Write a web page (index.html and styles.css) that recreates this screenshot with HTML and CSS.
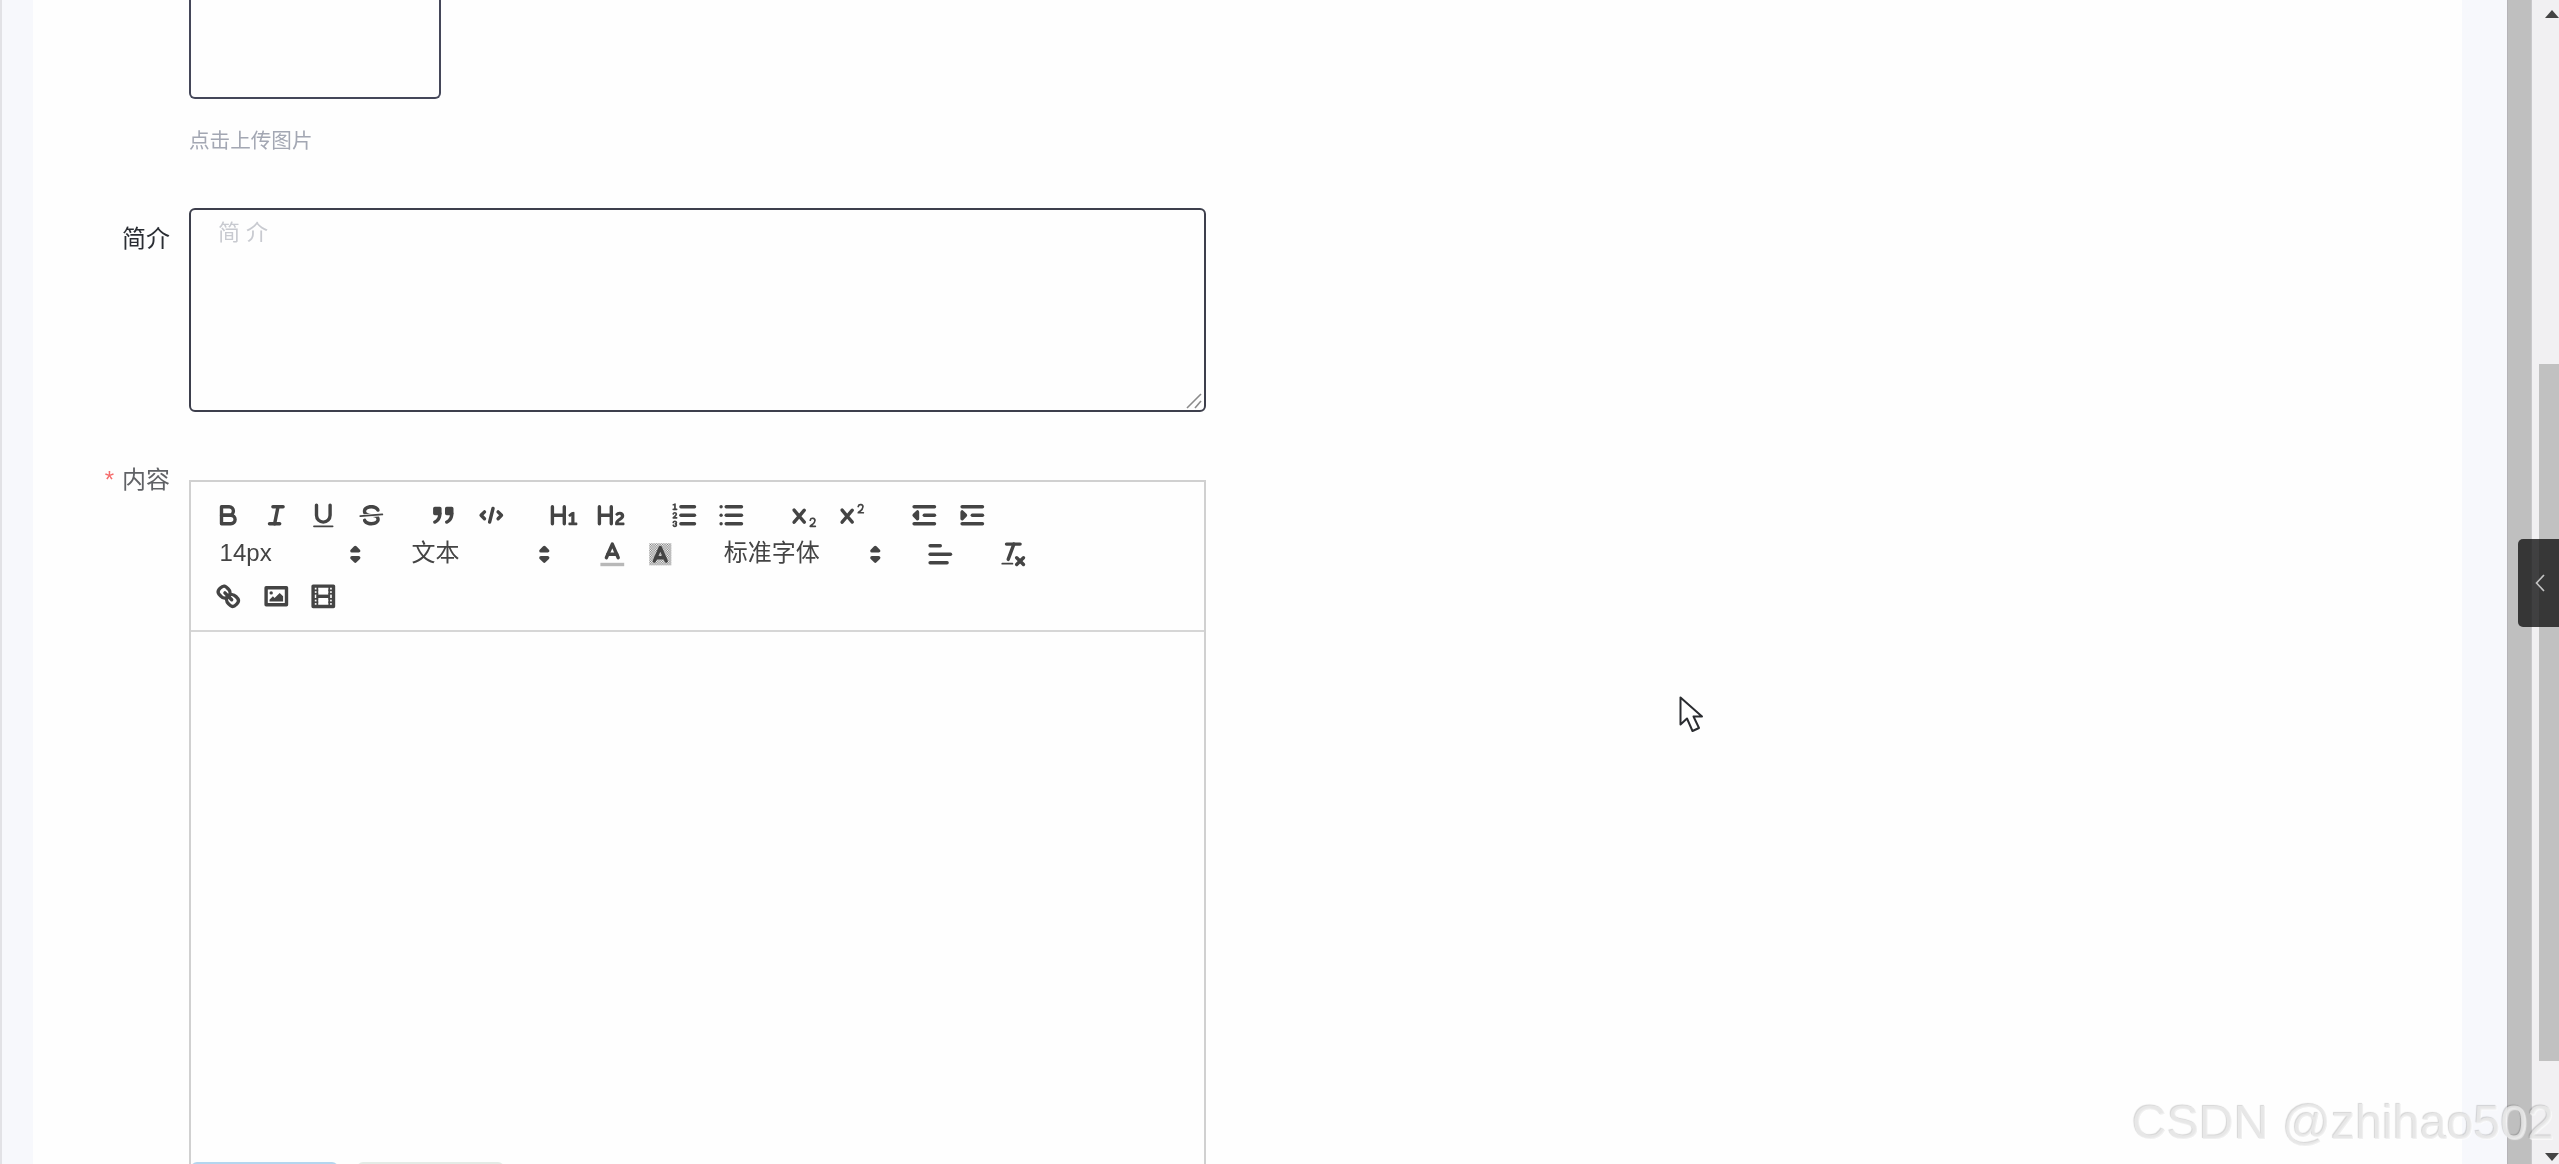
FILE: index.html
```html
<!DOCTYPE html>
<html lang="zh-CN">
<head>
<meta charset="utf-8">
<title>表单</title>
<link rel="stylesheet" href="styles.css">
</head>
<body>
<div class="gutter-left"></div>
<main class="content">
  <form class="form">
    <div class="row">
      <div></div>
      <div>
        <div class="upload"></div>
        <div class="hint">点击上传图片</div>
      </div>
    </div>
    <div class="row row-intro">
      <label class="label label-dark">简介</label>
      <div class="intro-wrap">
        <textarea class="intro" placeholder="简 介"></textarea>
        <svg class="resizer" viewBox="0 0 16 16"><line x1="1" y1="15" x2="15" y2="1"/><line x1="9" y1="15" x2="15" y2="8"/></svg>
      </div>
    </div>
    <div class="row row-content">
      <label class="label label-content"><span class="star">*</span>内容</label>
      <div class="editor">
        <div class="toolbar">
          <div class="tb-row">
            <span class="group">
              <span class="btn"><svg class="ic" viewBox="0 0 18 18"><path class="st" d="M5,4H9.5A2.5,2.5,0,0,1,12,6.5v0A2.5,2.5,0,0,1,9.5,9H5A0,0,0,0,1,5,9V4A0,0,0,0,1,5,4Z"/><path class="st" d="M5,9h5.5A2.5,2.5,0,0,1,13,11.5v0A2.5,2.5,0,0,1,10.5,14H5a0,0,0,0,1,0,0V9A0,0,0,0,1,5,9Z"/></svg></span>
              <span class="btn"><svg class="ic" viewBox="0 0 18 18"><line class="st" x1="7" x2="13" y1="4" y2="4"/><line class="st" x1="5" x2="11" y1="14" y2="14"/><line class="st" x1="8" x2="10" y1="14" y2="4"/></svg></span>
              <span class="btn"><svg class="ic" viewBox="0 0 18 18"><path class="st" d="M5,3V9a4.012,4.012,0,0,0,4,4H9a4.012,4.012,0,0,0,4-4V3"/><rect class="fl" height="1" rx="0.5" ry="0.5" width="12" x="3" y="15"/></svg></span>
              <span class="btn"><svg class="ic" viewBox="0 0 18 18"><line class="st thin" x1="15.5" x2="2.5" y1="8.5" y2="9.5"/><path class="fl" d="M9.007,8C6.542,7.791,6,7.519,6,6.5,6,5.792,7.283,5,9,5c1.571,0,2.765.679,2.969,1.309a1,1,0,0,0,1.9-.617C13.356,4.106,11.354,3,9,3,6.2,3,4,4.538,4,6.5a3.2,3.2,0,0,0,.5,1.843Z"/><path class="fl" d="M8.984,10C11.457,10.208,12,10.479,12,11.5c0,.708-1.283,1.5-3,1.5-1.571,0-2.765-.679-2.969-1.309a1,1,0,1,0-1.9.617C4.644,13.894,6.646,15,9,15c2.8,0,5-1.538,5-3.5a3.2,3.2,0,0,0-.5-1.843Z"/></svg></span>
            </span>
            <span class="group">
              <span class="btn"><svg class="ic" viewBox="0 0 18 18"><rect class="fl st" height="3" width="3" x="4" y="5"/><rect class="fl st" height="3" width="3" x="11" y="5"/><path class="st" d="M7,8c0,4.031-3,5-3,5"/><path class="st" d="M14,8c0,4.031-3,5-3,5"/></svg></span>
              <span class="btn"><svg class="ic" viewBox="0 0 18 18"><polyline class="st" points="5 7 3 9 5 11"/><polyline class="st" points="13 7 15 9 13 11"/><line class="st" x1="10" x2="8" y1="5" y2="13"/></svg></span>
            </span>
            <span class="group">
              <span class="btn"><svg class="ic" viewBox="0 0 18 18"><path class="fl" d="M10,4V14a1,1,0,0,1-2,0V10H3v4a1,1,0,0,1-2,0V4a1,1,0,0,1,2,0V8H8V4a1,1,0,0,1,2,0Zm6.06787,9.209H14.98975V7.59863a.54085.54085,0,0,0-.605-.60547h-.62744a1.01119,1.01119,0,0,0-.748.29688L11.645,8.56641a.5435.5435,0,0,0-.022.8584l.28613.30762a.53861.53861,0,0,0,.84717.0332l.09912-.08789a1.2137,1.2137,0,0,0,.2417-.35254h.02246s-.01123.30859-.01123.60547V13.209H12.041a.54085.54085,0,0,0-.605.60547v.43945a.54085.54085,0,0,0,.605.60547h4.02686a.54085.54085,0,0,0,.605-.60547v-.43945A.54085.54085,0,0,0,16.06787,13.209Z"/></svg></span>
              <span class="btn"><svg class="ic" viewBox="0 0 18 18"><path class="fl" d="M16.73975,13.81445v.43945a.54085.54085,0,0,1-.605.60547H11.855a.58392.58392,0,0,1-.64893-.60547V14.0127c0-2.90527,3.39941-3.42187,3.39941-4.55469a.77675.77675,0,0,0-.84717-.78125,1.17684,1.17684,0,0,0-.83594.38477c-.2749.26367-.561.374-.85791.13184l-.4292-.34082c-.30811-.24219-.38525-.51758-.1543-.81445a2.97155,2.97155,0,0,1,2.45361-1.17676,2.45393,2.45393,0,0,1,2.68408,2.40918c0,2.45312-3.1792,2.92676-3.27832,3.93848h2.79443A.54085.54085,0,0,1,16.73975,13.81445ZM9,3A.99974.99974,0,0,0,8,4V8H3V4A1,1,0,0,0,1,4V14a1,1,0,0,0,2,0V10H8v4a1,1,0,0,0,2,0V4A.99974.99974,0,0,0,9,3Z"/></svg></span>
            </span>
            <span class="group">
              <span class="btn"><svg class="ic" viewBox="0 0 18 18"><line class="st" x1="7" x2="15" y1="4" y2="4"/><line class="st" x1="7" x2="15" y1="9" y2="9"/><line class="st" x1="7" x2="15" y1="14" y2="14"/><line class="st thin" x1="2.5" x2="4.5" y1="5.5" y2="5.5"/><path class="fl" d="M3.5,6A0.5,0.5,0,0,1,3,5.5V3.085l-0.276.138A0.5,0.5,0,0,1,2.053,3c-0.124-.247-0.023-0.324.224-0.447l1-.5A0.5,0.5,0,0,1,4,2.5v3A0.5,0.5,0,0,1,3.5,6Z"/><path class="st thin" d="M4.5,10.5h-2c0-.234,1.85-1.076,1.85-2.234A0.959,0.959,0,0,0,2.5,8.156"/><path class="st thin" d="M2.5,14.846a0.959,0.959,0,0,0,1.85-.109A0.7,0.7,0,0,0,3.75,14a0.688,0.688,0,0,0,.6-0.736,0.959,0.959,0,0,0-1.85-.109"/></svg></span>
              <span class="btn"><svg class="ic" viewBox="0 0 18 18"><line class="st" x1="6" x2="15" y1="4" y2="4"/><line class="st" x1="6" x2="15" y1="9" y2="9"/><line class="st" x1="6" x2="15" y1="14" y2="14"/><line class="st" x1="3" x2="3" y1="4" y2="4"/><line class="st" x1="3" x2="3" y1="9" y2="9"/><line class="st" x1="3" x2="3" y1="14" y2="14"/></svg></span>
            </span>
            <span class="group">
              <span class="btn"><svg class="ic" viewBox="0 0 18 18"><path class="fl" d="M15.5,15H13.861a3.858,3.858,0,0,0,1.914-2.975,1.8,1.8,0,0,0-1.6-1.751A1.921,1.921,0,0,0,12.021,11.7a0.50013,0.50013,0,1,0,.957.291h0a0.914,0.914,0,0,1,1.053-.725,0.81,0.81,0,0,1,.744.762c0,1.076-1.16971,1.86982-1.93971,2.43082A1.45639,1.45639,0,0,0,12,15.5a0.5,0.5,0,0,0,.5.5h3A0.5,0.5,0,0,0,15.5,15Z"/><path class="fl" d="M9.65,5.241a1,1,0,0,0-1.409.108L6,7.964,3.759,5.349A1,1,0,0,0,2.192,6.59178Q2.21541,6.6213,2.241,6.649L4.684,9.5,2.241,12.35A1,1,0,0,0,3.71,13.70722q0.02557-.02768.049-0.05722L6,11.036,8.241,13.65a1,1,0,1,0,1.567-1.24277Q9.78459,12.3777,9.759,12.35L7.316,9.5,9.759,6.651A1,1,0,0,0,9.65,5.241Z"/></svg></span>
              <span class="btn"><svg class="ic" viewBox="0 0 18 18"><path class="fl" d="M15.5,7H13.861a4.015,4.015,0,0,0,1.914-2.975,1.8,1.8,0,0,0-1.6-1.751A1.922,1.922,0,0,0,12.021,3.7a0.5,0.5,0,1,0,.957.291,0.917,0.917,0,0,1,1.053-.725,0.81,0.81,0,0,1,.744.762c0,1.077-1.164,1.925-1.934,2.486A1.423,1.423,0,0,0,12,7.5a0.5,0.5,0,0,0,.5.5h3A0.5,0.5,0,0,0,15.5,7Z"/><path class="fl" d="M9.651,5.241a1,1,0,0,0-1.41.108L6,7.964,3.759,5.349a1,1,0,1,0-1.519,1.3L4.683,9.5,2.241,12.35a1,1,0,1,0,1.519,1.3L6,11.036,8.241,13.65a1,1,0,0,0,1.519-1.3L7.317,9.5,9.759,6.651A1,1,0,0,0,9.651,5.241Z"/></svg></span>
            </span>
            <span class="group">
              <span class="btn"><svg class="ic" viewBox="0 0 18 18"><line class="st" x1="3" x2="15" y1="14" y2="14"/><line class="st" x1="3" x2="15" y1="4" y2="4"/><line class="st" x1="9" x2="15" y1="9" y2="9"/><polyline class="fl st" points="5 7 5 11 3 9 5 7"/></svg></span>
              <span class="btn"><svg class="ic" viewBox="0 0 18 18"><line class="st" x1="3" x2="15" y1="14" y2="14"/><line class="st" x1="3" x2="15" y1="4" y2="4"/><line class="st" x1="9" x2="15" y1="9" y2="9"/><polyline class="fl st" points="3 7 3 11 5 9 3 7"/></svg></span>
            </span>
          </div>
          <div class="tb-row tb-row-2">
            <span class="group">
              <span class="picker picker-size"><span class="picker-text">14px</span><svg class="ic" viewBox="0 0 18 18"><polygon class="fl st" points="7 11 9 13 11 11"/><polygon class="fl st" points="7 7 9 5 11 7"/></svg></span>
            </span>
            <span class="group">
              <span class="picker picker-header"><span class="picker-text">文本</span><svg class="ic" viewBox="0 0 18 18"><polygon class="fl st" points="7 11 9 13 11 11"/><polygon class="fl st" points="7 7 9 5 11 7"/></svg></span>
            </span>
            <span class="group">
              <span class="btn"><svg class="ic" viewBox="0 0 18 18"><line class="st light" x1="3" x2="15" y1="15" y2="15"/><polyline class="st" points="5.5 11 9 3 12.5 11"/><line class="st" x1="11.63" x2="6.38" y1="9" y2="9"/></svg></span>
              <span class="btn"><svg class="ic" viewBox="0 0 18 18"><defs><pattern id="dither" width="1" height="1" patternUnits="userSpaceOnUse"><rect class="dot" width="0.5" height="0.5"/><rect class="dot" x="0.5" y="0.5" width="0.5" height="0.5"/></pattern></defs><rect fill="url(#dither)" x="2.5" y="2.5" width="13" height="13"/><polyline class="st" points="5.5 13 9 5 12.5 13"/><line class="st" x1="11.63" x2="6.38" y1="11" y2="11"/></svg></span>
            </span>
            <span class="group">
              <span class="picker picker-font"><span class="picker-text">标准字体</span><svg class="ic" viewBox="0 0 18 18"><polygon class="fl st" points="7 11 9 13 11 11"/><polygon class="fl st" points="7 7 9 5 11 7"/></svg></span>
            </span>
            <span class="group">
              <span class="btn"><svg class="ic" viewBox="0 0 18 18"><line class="st" x1="3" x2="15" y1="9" y2="9"/><line class="st" x1="3" x2="13" y1="14" y2="14"/><line class="st" x1="3" x2="9" y1="4" y2="4"/></svg></span>
            </span>
            <span class="group">
              <span class="btn"><svg class="ic" viewBox="0 0 18 18"><line class="st" x1="5" x2="13" y1="3" y2="3"/><line class="st" x1="6" x2="9.35" y1="12" y2="3"/><line class="st" x1="11" x2="15" y1="11" y2="15"/><line class="st" x1="15" x2="11" y1="11" y2="15"/><rect class="fl" height="1" rx="0.5" ry="0.5" width="7" x="2" y="14"/></svg></span>
            </span>
          </div>
          <div class="tb-row tb-row-3">
            <span class="group">
              <span class="btn"><svg class="ic" viewBox="0 0 18 18"><line class="st" x1="7" x2="11" y1="7" y2="11"/><path class="st" d="M8.9,4.577a3.476,3.476,0,0,1,.36,4.679A3.476,3.476,0,0,1,4.577,8.9C3.185,7.5,2.035,6.4,4.217,4.217S7.5,3.185,8.9,4.577Z"/><path class="st" d="M13.423,9.1a3.476,3.476,0,0,0-4.679-.36,3.476,3.476,0,0,0,.36,4.679c1.392,1.392,2.5,2.542,4.679.36S14.815,10.5,13.423,9.1Z"/></svg></span>
              <span class="btn"><svg class="ic" viewBox="0 0 18 18"><rect class="st" height="10" width="12" x="3" y="4"/><circle class="fl" cx="6" cy="7" r="1"/><polyline class="fl" points="5 12 5 11 7 9 8 10 11 7 13 9 13 12 5 12"/></svg></span>
              <span class="btn"><svg class="ic" viewBox="0 0 18 18"><rect class="st" height="12" width="12" x="3" y="3"/><rect class="fl" height="12" width="1" x="5" y="3"/><rect class="fl" height="12" width="1" x="12" y="3"/><rect class="fl" height="2" width="8" x="5" y="8"/><rect class="fl" height="1" width="3" x="3" y="5"/><rect class="fl" height="1" width="3" x="3" y="7"/><rect class="fl" height="1" width="3" x="3" y="10"/><rect class="fl" height="1" width="3" x="3" y="12"/><rect class="fl" height="1" width="3" x="12" y="5"/><rect class="fl" height="1" width="3" x="12" y="7"/><rect class="fl" height="1" width="3" x="12" y="10"/><rect class="fl" height="1" width="3" x="12" y="12"/></svg></span>
            </span>
          </div>
        </div>
        <div class="edit-area"></div>
        <div class="actions">
          <span class="action action-primary"></span>
          <span class="action action-plain"></span>
        </div>
      </div>
    </div>
  </form>
</main>
<div class="gutter-right"></div>
<div class="band"></div>
<div class="scrollbar">
  <svg class="sb-arrow" viewBox="0 0 14 8"><polygon points="7 0 14 8 0 8"/></svg>
  <div class="sb-thumb"></div>
  <svg class="sb-arrow sb-arrow-down" viewBox="0 0 14 8"><polygon points="0 0 14 0 7 8"/></svg>
</div>
<div class="side-tab"><svg class="side-chevron" viewBox="0 0 10 18"><polyline points="9 1 1.5 9 9 17"/></svg></div>
<svg class="cursor" viewBox="0 0 24 37"><path d="M1.5 1.5V28.5L8 22.5L13.5 35L20 32L14.5 20.5H23Z"/></svg>
<div class="watermark">CSDN @zhihao502</div>
</body>
</html>
```
FILE: styles.css
```css
* { box-sizing: border-box; }
html, body { height: 100%; }
body {
  margin: 0;
  display: flex;
  height: 100vh;
  overflow: hidden;
  background: #fefefe;
  font-family: "Liberation Sans", "Noto Sans CJK SC", sans-serif;
  color: #444;
}
.gutter-left {
  flex: 0 0 33px;
  background: #f7f8fc;
  border-left: 2px solid #e2e2e6;
}
.content {
  flex: 0 0 2429px;
  background: #fefefe;
  overflow: hidden;
}
.gutter-right { flex: 0 0 45px; background: #f7f8fc; }
.band {
  flex: 0 0 25px;
  background: #bfbfbf;
  border-left: 1px solid #b5b3b7;
  border-right: 1px solid #c9c8cb;
}
.scrollbar {
  flex: 0 0 27px;
  background: #f1f0f2;
  position: relative;
  display: flex;
  flex-direction: column;
  align-items: flex-end;
}
.sb-arrow {
  width: 14px;
  height: 8px;
  fill: #444;
  margin: 10px 0 0;
  display: block;
  position: absolute;
  right: 0;
  top: 0;
}
.sb-arrow-down { top: auto; bottom: 3px; margin: 0; }
.sb-thumb {
  width: 20px;
  height: 697px;
  margin-top: 364px;
  background: #c1c1c1;
}

.form { display: flex; flex-direction: column; filter: blur(0.45px); }
.row {
  display: grid;
  grid-template-columns: 137px 1017px;
  column-gap: 19px;
}
.row-intro { margin-top: 55px; }
.row-content { margin-top: 68px; }

.upload {
  width: 252px;
  height: 99px;
  border: 2px solid #444759;
  border-top: 0;
  border-radius: 0 0 6px 6px;
}
.hint {
  margin-top: 30px;
  font-size: 20.6px;
  line-height: 24px;
  color: #a3a7b3;
}
.label {
  font-size: 24px;
  line-height: 24px;
  text-align: right;
  color: #606266;
}
.label-dark { padding-top: 19px; color: #2a2d33; }
.label-content { margin-top: -12px; }
.star { color: #f56c6c; margin-right: 8px; }
.intro-wrap { position: relative; height: 204px; }
.intro {
  display: block;
  width: 1017px;
  height: 204px;
  border: 2px solid #3d3f4c;
  border-radius: 6px;
  background: #fefefe;
  padding: 9px 27px;
  font-family: "Liberation Sans", "Noto Sans CJK SC", sans-serif;
  font-size: 22px;
  line-height: 28px;
  outline: none;
  resize: none;
}
.intro::placeholder { color: #c8cad0; }
.resizer {
  position: absolute;
  right: 4px;
  bottom: 3px;
  width: 16px;
  height: 16px;
  stroke: #8a8a8a;
  stroke-width: 1.6;
}

.editor {
  position: relative;
  height: 900px;
  border: 2px solid #d0d0d0;
  border-bottom: 0;
}
.toolbar {
  height: 150px;
  padding: 13px 13.6px 0;
  border-bottom: 2px solid #d6d6d6;
}
.tb-row { display: flex; height: 40px; align-items: center; }
.tb-row-2 { margin-top: -1px; }
.tb-row-3 { margin-top: 2px; }
.group { display: flex; margin-right: 25px; }
.btn {
  display: flex;
  width: 47.6px;
  height: 40px;
  align-items: center;
  justify-content: center;
}
.ic { width: 30.6px; height: 30.6px; flex: none; display: block; }
.st {
  fill: none;
  stroke: #444;
  stroke-width: 2;
  stroke-linecap: round;
  stroke-linejoin: round;
}
.fl { fill: #444; }
.st.fl { fill: #444; }
.st.thin { stroke-width: 1; }
.st.light { stroke: #b8b8b8; stroke-linecap: square; }
.dot { fill: #7c7c7c; }
.picker {
  display: flex;
  height: 40px;
  align-items: center;
  justify-content: space-between;
  padding-left: 15px;
  font-size: 24px;
  color: #444;
}
.picker-text { line-height: 30px; margin-bottom: 3px; }
.picker-size { width: 166px; margin-right: 1px; }
.picker-header { width: 163px; margin-right: 4px; }
.picker-font { width: 181.5px; margin-right: 1.5px; }
.edit-area { height: 700px; }
.actions {
  position: absolute;
  left: 0;
  top: 680px;
  display: flex;
  gap: 19px;
}
.action { display: block; width: 147px; height: 40px; border-radius: 6px 6px 0 0; }
.action-primary { background: #b4d6ef; }
.action-plain { background: #e4ebe6; }

.side-tab {
  position: absolute;
  left: 2518px;
  top: 539px;
  width: 41px;
  height: 88px;
  background: rgba(20, 20, 20, 0.8);
  border-radius: 5px 0 0 5px;
  display: flex;
  align-items: center;
  padding-left: 17px;
}
.side-chevron {
  width: 10px;
  height: 18px;
  fill: none;
  stroke: #c4c4c4;
  stroke-width: 1.6;
}
.cursor {
  position: absolute;
  left: 1679px;
  top: 696px;
  width: 24px;
  height: 37px;
  fill: #fff;
  stroke: #2a2c30;
  stroke-width: 2;
  stroke-linejoin: round;
}
.watermark {
  position: absolute;
  left: 2132px;
  top: 1094px;
  font-size: 48.3px;
  line-height: 56px;
  white-space: nowrap;
  color: rgba(236, 236, 236, 0.75);
  text-shadow: -1px -1px 1px rgba(0, 0, 0, 0.16), 1px 1px 1px rgba(255, 255, 255, 0.6);
}
```
